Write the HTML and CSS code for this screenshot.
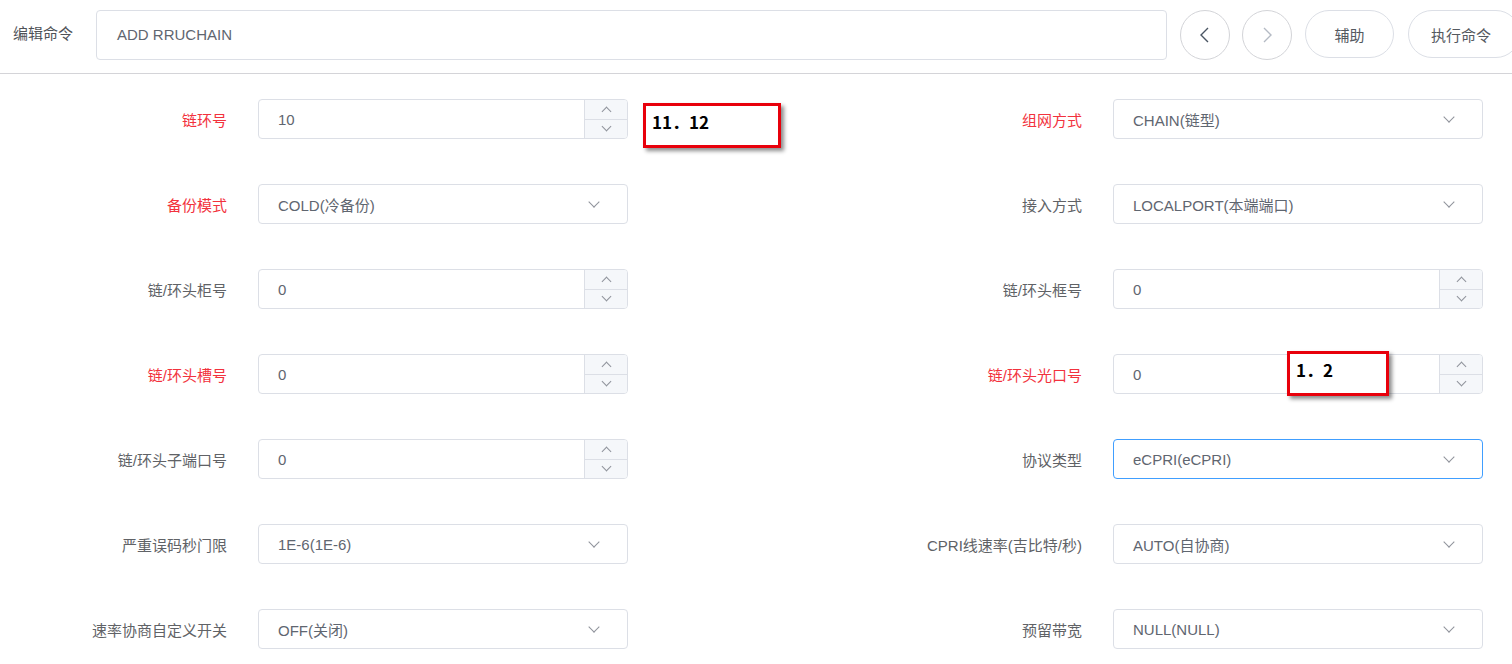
FILE: index.html
```html
<!DOCTYPE html>
<html lang="zh-CN">
<head>
    <meta charset="UTF-8">
    <title>编辑命令</title>
    <link rel="stylesheet" href="styles.css">
</head>
<body>

    <div class="cmd-bar">
        <span class="cmd-label">编辑命令</span>
        <div class="cmd-input">ADD RRUCHAIN</div>
        <button class="circle-btn">
            <svg width="14" height="16" viewBox="0 0 14 16"><path d="M10 1 L3 8 L10 15" fill="none" stroke="#4a5563" stroke-width="1.4"/></svg>
        </button>
        <button class="circle-btn">
            <svg width="14" height="16" viewBox="0 0 14 16"><path d="M4 1 L11 8 L4 15" fill="none" stroke="#b4bac4" stroke-width="1.4"/></svg>
        </button>
        <button class="pill-btn">辅助</button>
        <button class="pill-btn wide">执行命令</button>
    </div>

    <div class="form">
        <!-- row 1 -->
        <div class="field">
            <label class="req">链环号</label>
            <div class="box num">
                <span class="val">10</span>
                <div class="stepper"><span class="up"></span><span class="down"></span></div>
            </div>
            <div class="note note-a">11．12</div>
        </div>
        <div class="field">
            <label class="req">组网方式</label>
            <div class="box sel"><span class="val">CHAIN(链型)</span><span class="arrow"></span></div>
        </div>

        <!-- row 2 -->
        <div class="field">
            <label class="req">备份模式</label>
            <div class="box sel"><span class="val">COLD(冷备份)</span><span class="arrow"></span></div>
        </div>
        <div class="field">
            <label>接入方式</label>
            <div class="box sel"><span class="val">LOCALPORT(本端端口)</span><span class="arrow"></span></div>
        </div>

        <!-- row 3 -->
        <div class="field">
            <label>链/环头柜号</label>
            <div class="box num">
                <span class="val">0</span>
                <div class="stepper"><span class="up"></span><span class="down"></span></div>
            </div>
        </div>
        <div class="field">
            <label>链/环头框号</label>
            <div class="box num">
                <span class="val">0</span>
                <div class="stepper"><span class="up"></span><span class="down"></span></div>
            </div>
        </div>

        <!-- row 4 -->
        <div class="field">
            <label class="req">链/环头槽号</label>
            <div class="box num">
                <span class="val">0</span>
                <div class="stepper"><span class="up"></span><span class="down"></span></div>
            </div>
        </div>
        <div class="field">
            <label class="req">链/环头光口号</label>
            <div class="box num">
                <span class="val">0</span>
                <div class="stepper"><span class="up"></span><span class="down"></span></div>
            </div>
            <div class="note note-b">1．2</div>
        </div>

        <!-- row 5 -->
        <div class="field">
            <label>链/环头子端口号</label>
            <div class="box num">
                <span class="val">0</span>
                <div class="stepper"><span class="up"></span><span class="down"></span></div>
            </div>
        </div>
        <div class="field">
            <label>协议类型</label>
            <div class="box sel focus"><span class="val">eCPRI(eCPRI)</span><span class="arrow"></span></div>
        </div>

        <!-- row 6 -->
        <div class="field">
            <label>严重误码秒门限</label>
            <div class="box sel"><span class="val">1E-6(1E-6)</span><span class="arrow"></span></div>
        </div>
        <div class="field">
            <label>CPRI线速率(吉比特/秒)</label>
            <div class="box sel"><span class="val">AUTO(自协商)</span><span class="arrow"></span></div>
        </div>

        <!-- row 7 -->
        <div class="field">
            <label>速率协商自定义开关</label>
            <div class="box sel"><span class="val">OFF(关闭)</span><span class="arrow"></span></div>
        </div>
        <div class="field">
            <label>预留带宽</label>
            <div class="box sel"><span class="val">NULL(NULL)</span><span class="arrow"></span></div>
        </div>
    </div>

</body>
</html>
```

FILE: styles.css
```css
body {
    margin: 0;
    padding: 0;
    background: #fff;
    font-family: "Liberation Sans", "Noto Sans CJK SC", sans-serif;
    font-size: 15px;
    color: #606266;
    overflow: hidden;
    width: 1512px;
    height: 664px;
}
.cmd-bar {
    display: flex;
    align-items: flex-start;
    gap: 12px;
    height: 74px;
    padding: 10px 0 0 13px;
    border-bottom: 1px solid #d4d4d8;
    width: 1700px;
    box-sizing: border-box;
}
.cmd-label {
    width: 71px;
    line-height: 48px;
    color: #4f5258;
}
.cmd-input {
    width: 1071px;
    height: 50px;
    box-sizing: border-box;
    border: 1px solid #dcdfe6;
    border-radius: 4px;
    padding-left: 20px;
    line-height: 48px;
    color: #5f6670;
    margin-right: 1px;
}
.circle-btn {
    width: 50px;
    height: 50px;
    border-radius: 50%;
    border: 1px solid #d3d4d8;
    background: #fff;
    display: flex;
    align-items: center;
    justify-content: center;
    padding: 0;
}
.pill-btn {
    width: 89px;
    height: 48px;
    border-radius: 24px;
    border: 1px solid #dcdfe6;
    background: #fff;
    font-family: inherit;
    font-size: 15px;
    color: #55595f;
    margin-left: 1px;
}
.pill-btn.wide {
    width: 112px;
    margin-left: 2px;
    padding-right: 12px;
}

.form {
    display: grid;
    grid-template-columns: 855px 855px;
    row-gap: 45px;
    padding-top: 25px;
}
.field {
    display: flex;
    align-items: center;
    position: relative;
}
.field label {
    width: 227px;
    padding-right: 31px;
    box-sizing: content-box;
    text-align: right;
    color: #606266;
}
.field label.req {
    color: #f2323d;
}
.box {
    width: 370px;
    height: 40px;
    box-sizing: border-box;
    border: 1px solid #dcdfe6;
    border-radius: 4px;
    display: flex;
    align-items: center;
    background: #fff;
}
.box.focus {
    border-color: #409eff;
}
.val {
    flex: 1;
    padding-left: 19px;
    color: #5f6670;
}
.sel .arrow {
    width: 7px;
    height: 7px;
    border-right: 1px solid #8f939b;
    border-bottom: 1px solid #8f939b;
    transform: rotate(45deg);
    margin-right: 29px;
    margin-top: -4px;
}
.stepper {
    width: 42px;
    height: 38px;
    background: #f5f7fa;
    border-left: 1px solid #dcdfe6;
    border-radius: 0 3px 3px 0;
    display: flex;
    flex-direction: column;
}
.stepper span {
    flex: 1;
    display: flex;
    align-items: center;
    justify-content: center;
}
.stepper .up {
    border-bottom: 1px solid #dcdfe6;
}
.stepper span::after {
    content: "";
    width: 6px;
    height: 6px;
    border-left: 1px solid #8f939b;
    border-top: 1px solid #8f939b;
}
.stepper .up::after {
    transform: rotate(45deg);
    margin-top: 4px;
}
.stepper .down::after {
    transform: rotate(225deg);
    margin-top: -4px;
}

.note {
    position: absolute;
    height: 45px;
    box-sizing: border-box;
    border: 3px solid #e8000b;
    background: #fff;
    box-shadow: 3px 3px 4px rgba(0, 0, 0, 0.45);
    font-family: "Noto Sans CJK SC", sans-serif;
    font-weight: bold;
    font-size: 17px;
    color: #000;
    padding: 5px 0 0 6px;
    line-height: 22px;
}
.note-a {
    left: 643px;
    top: 4px;
    width: 138px;
}
.note-b {
    left: 432px;
    top: -3px;
    width: 102px;
}
```
